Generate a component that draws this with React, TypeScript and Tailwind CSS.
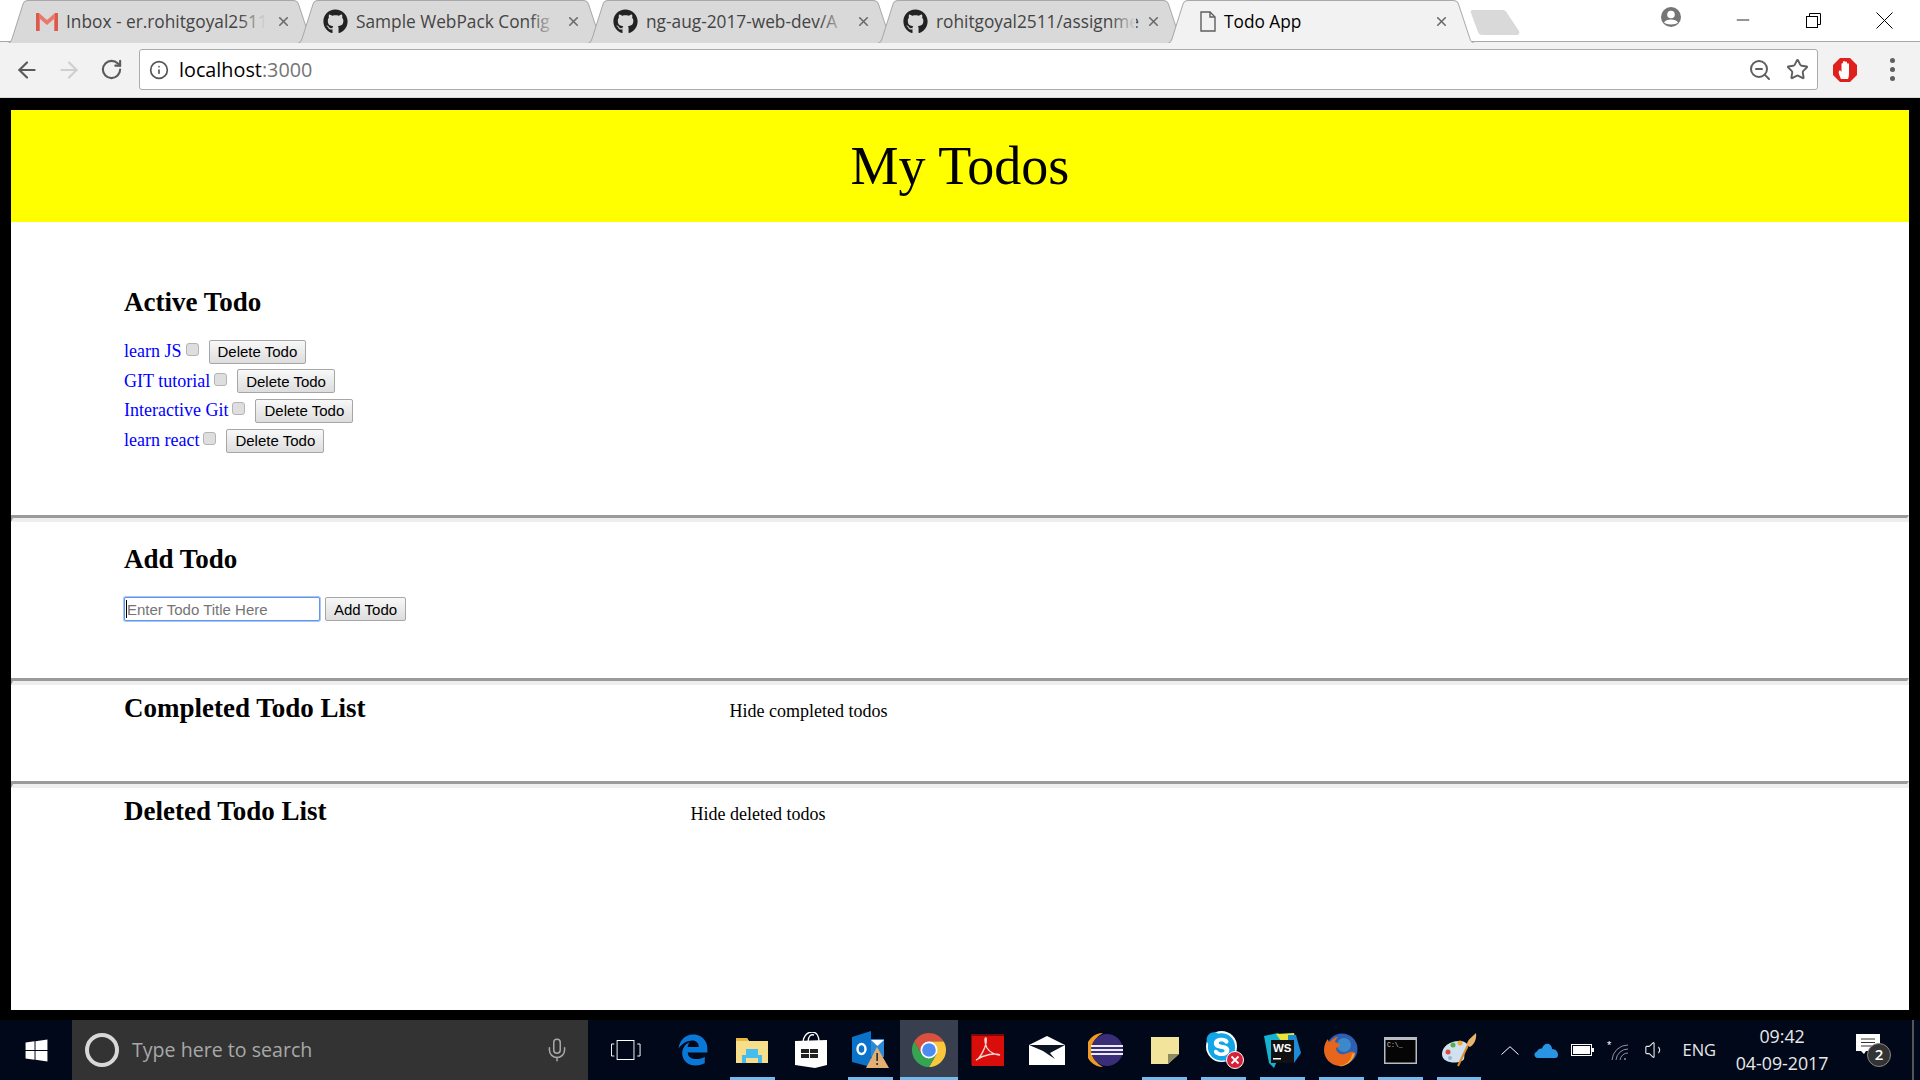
import { ArrowLeft, ArrowRight, Info, Mic, RotateCw, Star, Volume1, X, Minus, ZoomOut } from 'lucide-react';
import { FaEdgeLegacy, FaGithub, FaSkype, FaWindows } from 'react-icons/fa';

const uiFont = "font-['Open_Sans','Noto_Sans',sans-serif]";
const serif = "font-['Liberation_Serif','Times_New_Roman',serif]";
const arial = "font-['Liberation_Sans',Arial,sans-serif]";

function TabShape({ active }: { active?: boolean }) {
  return (
    <svg className="absolute inset-0 w-full h-full" viewBox="0 0 310 42" preserveAspectRatio="none">
      <path
        d="M0.5 42.5 C4 42.5 5 41 6 38 L17 4 C18 1.5 19.5 0.5 22 0.5 L287 0.5 C290 0.5 291.5 1.5 292.5 4 L304 38 C305 41 306 42.5 310 42.5"
        fill={active ? '#f2f2f2' : '#d9d9d9'}
        stroke="#a8a8a8"
      />
    </svg>
  );
}

function GmailIcon() {
  return (
    <svg width="22" height="18" viewBox="0 0 22 18">
      <path d="M0 0 H3 L11 7 L19 0 H22 V18 H18 V6 L11 12 L4 6 V18 H0 Z" fill="#e8786c" />
      <path d="M0 0 H3 V18 H0 Z M19 0 H22 V18 H19 Z" fill="#db5a4e" />
    </svg>
  );
}

function DocIcon() {
  return (
    <svg width="16" height="21" viewBox="0 0 16 21" fill="none" stroke="#5f5f5f" strokeWidth="1.4">
      <path d="M1 1 H10 L15 6 V20 H1 Z" />
      <path d="M10 1 V6 H15" />
    </svg>
  );
}

function Tab({ icon, title, active }: { icon: React.ReactNode; title: string; active?: boolean }) {
  return (
    <div className={`relative w-[310px] h-[43px] -mr-[20px] shrink-0 ${active ? 'z-10' : ''}`}>
      <TabShape active={active} />
      <div className="relative h-full flex items-center">
        <div className={`${active ? 'w-[58px]' : 'w-[60px]'} shrink-0 flex justify-end pr-[8px]`}>{icon}</div>
        <div className="relative w-[200px] whitespace-nowrap text-[17.3px] text-[#444]">
          <span className={active ? 'text-black' : ''}>{title}</span>
          {!active && <div className="absolute right-0 inset-y-0 w-[26px] bg-gradient-to-r from-transparent to-[#d9d9d9]" />}
        </div>
        <X size={15} strokeWidth={2.6} color="#6b6b6b" className="shrink-0 ml-[10px]" />
      </div>
    </div>
  );
}

function Opera() {
  return (
    <svg width="24" height="24" viewBox="0 0 24 24">
      <path d="M7 0 H17 L24 7 V17 L17 24 H7 L0 17 V7 Z" fill="#e0201c" />
      <path
        d="M8 21 C7 18 5 15 6 13 C7 12 8 13 8.500 14 V6 C8.500 4.500 10 4.500 10 6 V4 C10 2.500 12 2.500 12 4 V4.500 C12 3 14 3 14 4.500 V6 C14 5 16 5 16 6.500 V15 C16 18 15.500 20 15 21 Z"
        fill="#fff"
      />
    </svg>
  );
}

function ChromeIcon() {
  return (
    <svg width="34" height="34" viewBox="4 4 40 40">
      <path d="M6.68 14 A20 20 0 0 1 41.32 14 L24 14 L15.34 29 Z" fill="#d9503f" />
      <path d="M41.32 14 A20 20 0 0 1 24 44 L32.66 29 L24 14 Z" fill="#f8c73a" />
      <path d="M24 44 A20 20 0 0 1 6.68 14 L15.34 29 L32.66 29 Z" fill="#36a552" />
      <circle cx="24" cy="24" r="10" fill="#fff" />
      <circle cx="24" cy="24" r="8" fill="#4d8bf0" />
    </svg>
  );
}

function ExplorerIcon() {
  return (
    <svg width="32" height="27" viewBox="0 0 32 27">
      <path d="M0 1 H11 L13 4 H32 V26 H0 Z" fill="#f6de8b" />
      <path d="M0 1 H11 L13 4 H0 Z" fill="#e8b93d" />
      <path d="M10 12 H22 V18 H26 V26 H22 V21 H10 V26 H6 V18 H10 Z" fill="#45bdee" />
    </svg>
  );
}

function StoreIcon() {
  return (
    <svg width="32" height="36" viewBox="0 0 32 36">
      <path d="M0 9 L32 8 V33 L20 36 L0 33 Z" fill="#fff" />
      <path d="M8 12 C8 2 14 0 17 0 C22 0 24 5 24 10 M13 10 C13 4 16 2 19 3" fill="none" stroke="#fff" strokeWidth="1.4" />
      <path d="M6 17 H14 V21 H6 Z M15 17 H23 V21 H15 Z M6 22 H14 V26 H6 Z M15 22 H23 V26 H15 Z" fill="#222" />
    </svg>
  );
}

function OutlookIcon() {
  return (
    <svg width="37" height="38" viewBox="0 0 37 38">
      <path d="M0 6 L19 0 V36 L0 31 Z" fill="#0a72c8" />
      <rect x="19" y="8" width="13" height="18" fill="#2a8ad6" />
      <path d="M19 9 L32 9 L25.500 15 Z" fill="#fff" />
      <ellipse cx="9.500" cy="18" rx="4" ry="5" fill="none" stroke="#fff" strokeWidth="2.4" />
      <path d="M25 16 L37 37 H14 Z" fill="#e5ae73" />
      <path d="M24.300 22 H26 V30 H24.300 Z M24.300 32 H26 V34 H24.300 Z" fill="#333" />
    </svg>
  );
}

function AcrobatIcon() {
  return (
    <svg width="33" height="32" viewBox="0 0 33 32">
      <rect x="0" y="0" width="33" height="31" fill="#7a0808" />
      <rect x="1" y="2" width="32" height="30" fill="#d90e0a" />
      <path d="M5 26 C9 25 17 10 15 4 C14 3 13 8 16 14 C19 19 25 21 29 21 C24 19 14 20 5 26 Z" fill="none" stroke="#f2d5d5" strokeWidth="1.4" />
    </svg>
  );
}

function MailIcon() {
  return (
    <svg width="36" height="29" viewBox="0 0 36 29">
      <path d="M0 9 L18 0 L36 9 V29 H0 Z" fill="#fff" />
      <path d="M0 9 L36 9 L21 17 L26 23 L14 15 Z" fill="#0d1524" />
      <path d="M0 9.500 L14 15.500 L0 10.500 Z" fill="#fff" />
    </svg>
  );
}

function EclipseIcon() {
  return (
    <svg width="35" height="34" viewBox="0 0 35 34">
      <path d="M15 0 A17 17 0 0 0 15 34 A19 19 0 0 1 15 0 Z" fill="#f09a20" />
      <circle cx="19" cy="17" r="16" fill="#3a2d78" />
      <path d="M3 13 H35 M3 17 H35 M3 21 H35" stroke="#eceaf6" strokeWidth="2" />
    </svg>
  );
}

function StickyIcon() {
  return (
    <svg width="28" height="27" viewBox="0 0 28 27">
      <path d="M0 0 H28 V17 L17 27 H0 Z" fill="#f2e59b" />
      <path d="M28 17 L17 27 V17 Z" fill="#8d8b62" />
    </svg>
  );
}

function SkypeIcon() {
  return (
    <div className="relative w-[38px] h-[38px] ml-[3px]">
      <div className="absolute left-0 top-0 w-[31px] h-[31px] rounded-full bg-white flex items-center justify-center">
        <FaSkype size={34} color="#12a5e8" />
      </div>
      <svg className="absolute right-0 bottom-0" width="18" height="18" viewBox="0 0 18 18">
        <circle cx="9" cy="9" r="8.500" fill="#d81f38" stroke="#fff" strokeWidth="1" />
        <path d="M5.500 5.500 L12.500 12.500 M12.500 5.500 L5.500 12.500" stroke="#fff" strokeWidth="1.800" />
      </svg>
    </div>
  );
}

function WebStormIcon() {
  return (
    <svg width="37" height="35" viewBox="0 0 37 35">
      <path d="M0 3 L14 0 L22 8 L10 35 L5 30 Z" fill="#14b3cf" />
      <path d="M12 1 L30 0 L33 12 L20 12 Z" fill="#e8e43a" />
      <path d="M24 2 L32 2 L37 20 L30 30 L24 12 Z" fill="#1c8cd8" />
      <rect x="7" y="7" width="23" height="23" fill="#111" />
      <text x="9" y="19" fill="#fff" fontSize="11.500" fontWeight="700" fontFamily="'Liberation Sans',Arial,sans-serif">WS</text>
      <rect x="9" y="25" width="8" height="1.500" fill="#fff" />
    </svg>
  );
}

function FirefoxIcon() {
  return (
    <svg width="34" height="34" viewBox="0 0 34 34">
      <circle cx="18" cy="16" r="15.500" fill="#2f5fb3" />
      <circle cx="20" cy="12" r="7" fill="#3c89c9" />
      <path d="M31 20 C29 30 20 34 15 33 C6 32 0 25 0 17 C0 12 2 8 4 6 C4 8 5 9 6 9 C8 6 11 4 14 4 C12 6 11 8 11 9 C13 10 16 11 16 12 C16 14 13 14 12 15 C12 19 16 22 20 21 C24 20 28 17 31 20 Z" fill="#e8661c" />
      <path d="M31 20 C29 30 20 34 15 33 C22 32 27 28 28 21 Z" fill="#f4a52a" />
    </svg>
  );
}

function CmdIcon() {
  return (
    <svg width="33" height="27" viewBox="0 0 33 27">
      <rect x="0" y="0" width="33" height="27" fill="#b9bcc0" />
      <rect x="1.500" y="3" width="30" height="22.500" fill="#050505" />
      <text x="3" y="10" fill="#cfcfcf" fontSize="6.500" fontFamily="'Liberation Mono',monospace">C:\_</text>
    </svg>
  );
}

function PaintIcon() {
  return (
    <svg width="36" height="34" viewBox="0 0 36 34">
      <path d="M1 21 C1 13 10 7 20 8 C27 9 29 14 25 17 C22 19 24 22 23 26 C21 31 1 32 1 21 Z" fill="#cfe0ee" />
      <circle cx="7" cy="19" r="2.500" fill="#d94b3f" />
      <circle cx="12" cy="12" r="2.500" fill="#56b04a" />
      <circle cx="19" cy="10" r="2.500" fill="#f0a830" />
      <circle cx="9" cy="25" r="2" fill="#8fb8d8" />
      <path d="M17 33 L27 12" stroke="#e08a2a" strokeWidth="2" />
      <path d="M26 12 C26 7 30 5 35 0 C36 6 33 12 29 14 Z" fill="#e9b36a" />
    </svg>
  );
}

function OneDriveIcon() {
  return (
    <svg width="24" height="15" viewBox="0 0 24 15">
      <path d="M4 15 C0 15 -1 10 3 8.500 C4 6 6 5 8 5.500 C9 2 12 0 15 1 C17 2 18 4 18 6 C22 6 24 9 24 12 C24 14 23 15 21 15 Z" fill="#2a94e4" />
    </svg>
  );
}

function Battery() {
  return (
    <svg width="23" height="12" viewBox="0 0 23 12">
      <rect x="0.500" y="0.500" width="20" height="11" fill="none" stroke="#fff" />
      <rect x="2" y="2" width="17" height="8" fill="#fff" />
      <rect x="21" y="4" width="2" height="4" fill="#fff" />
    </svg>
  );
}

function Wifi() {
  return (
    <svg width="22" height="22" viewBox="0 0 22 22" fill="none" stroke="#8f949b" strokeWidth="1">
      <text x="0" y="10" fill="#fff" stroke="none" fontSize="11" fontFamily="'Liberation Sans',Arial,sans-serif">*</text>
      <path d="M5 21 A16 16 0 0 1 21 6 M9 21 A12 12 0 0 1 21 10 M13 21 A8 8 0 0 1 21 14" />
      <circle cx="18" cy="20" r="1" fill="#8f949b" stroke="none" />
    </svg>
  );
}

function Notification() {
  return (
    <div className="relative w-[35px] h-[33px]">
      <svg className="absolute left-0 top-0" width="24" height="24" viewBox="0 0 24 24">
        <path d="M0 0 H24 V17 H10 L8 20 L5 17 H0 Z" fill="#fff" />
        <path d="M5 5 H19 M5 8.500 H19 M5 12 H19" stroke="#333" strokeWidth="1" />
      </svg>
      <div className={`absolute right-0 bottom-0 w-[24px] h-[24px] rounded-full bg-[#333] border border-[#888] text-white text-[15px] font-semibold flex items-center justify-center ${uiFont}`}>2</div>
    </div>
  );
}

const taskApps = [
  { key: 'edge', icon: <FaEdgeLegacy size={32} color="#0a78d7" /> },
  { key: 'explorer', icon: <ExplorerIcon />, line: 'double' },
  { key: 'store', icon: <StoreIcon /> },
  { key: 'outlook', icon: <OutlookIcon />, line: 'single' },
  { key: 'chrome', icon: <ChromeIcon />, line: 'active' },
  { key: 'acrobat', icon: <AcrobatIcon /> },
  { key: 'mail', icon: <MailIcon /> },
  { key: 'eclipse', icon: <EclipseIcon /> },
  { key: 'sticky', icon: <StickyIcon />, line: 'single' },
  { key: 'skype', icon: <SkypeIcon />, line: 'single' },
  { key: 'webstorm', icon: <WebStormIcon />, line: 'single' },
  { key: 'firefox', icon: <FirefoxIcon />, line: 'single' },
  { key: 'cmd', icon: <CmdIcon />, line: 'double' },
  { key: 'paint', icon: <PaintIcon />, line: 'single' },
];

const todos = ['learn JS', 'GIT tutorial', 'Interactive Git', 'learn react'];

const buttonClass = `h-[24px] px-[8px] border border-[#a6a6a6] rounded-[2px] bg-gradient-to-b from-[#f8f8f8] to-[#dddddd] text-[15px] leading-none text-black ${arial}`;

function Rule() {
  return <div className="h-[7px] border-t-[3px] border-b-[4px] border-x-[2px] border-t-[#9a9a9a] border-b-[#eeeeee] border-l-[#9a9a9a] border-r-[#eeeeee]" />;
}

export default function App() {
  return (
    <div className={`w-[1920px] h-[1080px] overflow-hidden flex flex-col bg-black ${uiFont}`}>
      {/* tab strip */}
      <div className="relative h-[42px] shrink-0 bg-white flex items-start pl-[6px] border-b border-[#a8a8a8]">
        <Tab icon={<GmailIcon />} title="Inbox - er.rohitgoyal2511" />
        <Tab icon={<FaGithub size={25} color="#222" />} title="Sample WebPack Config" />
        <Tab icon={<FaGithub size={25} color="#222" />} title="ng-aug-2017-web-dev/A" />
        <Tab icon={<FaGithub size={25} color="#222" />} title="rohitgoyal2511/assignme" />
        <Tab active icon={<DocIcon />} title="Todo App" />
        <svg className="ml-[14px] mt-[10px] shrink-0" width="50" height="25" viewBox="0 0 50 25">
          <path d="M3 0 H33 C35 0 36 1 37 3 L49 21 C50 23 49 25 47 25 H12 C10 25 9 24 8 22 L1 3 C0 1 1 0 3 0 Z" fill="#d9d9d9" />
        </svg>
        <div className="ml-auto flex items-center h-[42px] -translate-y-[1px]">
          <svg className="mr-[27px] -mt-[6px]" width="20" height="20" viewBox="0 0 20 20">
            <circle cx="10" cy="10" r="10" fill="#757575" />
            <circle cx="10" cy="7.500" r="3.800" fill="#fff" />
            <path d="M3 15.500 C5 11.500 15 11.500 17 15.500 C15 18 5 18 3 15.500 Z" fill="#fff" />
          </svg>
          <div className="w-[70px] flex justify-center"><Minus size={20} strokeWidth={1} color="#000" /></div>
          <div className="w-[70px] flex justify-center">
            <svg width="15" height="15" viewBox="0 0 15 15" fill="none" stroke="#000">
              <rect x="0.500" y="3.500" width="11" height="11" />
              <path d="M3.500 3.500 V0.500 H14.500 V11.500 H11.500" />
            </svg>
          </div>
          <div className="w-[72px] flex justify-center">
            <svg width="17" height="17" viewBox="0 0 17 17" stroke="#000"><path d="M0.500 0.500 L16.500 16.500 M16.500 0.500 L0.500 16.500" /></svg>
          </div>
        </div>
      </div>

      {/* toolbar */}
      <div className="h-[56px] shrink-0 bg-[#f2f2f2] flex items-center border-b border-[#dadada]">
        <ArrowLeft size={26} strokeWidth={2} color="#5a5a5a" className="ml-[14px]" />
        <ArrowRight size={26} strokeWidth={2} color="#cfcfcf" className="ml-[16px]" />
        <RotateCw size={23} strokeWidth={2.2} color="#5a5a5a" className="ml-[18px]" />
        <div className="ml-[16px] w-[1679px] h-[41px] bg-white border border-[#ababab] rounded-[3px] flex items-center">
          <Info size={20} strokeWidth={2} color="#555" className="ml-[9px]" />
          <span className="ml-[10px] text-[19.8px] text-black">localhost<span className="text-[#757575]">:3000</span></span>
          <ZoomOut size={24} strokeWidth={2} color="#5f5f5f" className="ml-auto" />
          <Star size={23} strokeWidth={2} color="#5f5f5f" className="ml-[14px] mr-[8px]" />
        </div>
        <div className="ml-[15px]"><Opera /></div>
        <div className="ml-[33px] flex flex-col gap-[4px]">
          <div className="w-[5px] h-[5px] rounded-full bg-[#5f5f5f]" />
          <div className="w-[5px] h-[5px] rounded-full bg-[#5f5f5f]" />
          <div className="w-[5px] h-[5px] rounded-full bg-[#5f5f5f]" />
        </div>
      </div>

      {/* page */}
      <div className={`mt-[12px] mx-[11px] h-[900px] shrink-0 bg-white text-black ${serif}`}>
        <h1 className="h-[112px] bg-[#ffff00] flex items-center justify-center text-[54px] font-normal">My Todos</h1>

        <section className="h-[293px] pl-[113px] pt-[64px]">
          <h2 className="text-[27px] leading-[32px] font-bold">Active Todo</h2>
          <ul className="mt-[21.5px] flex flex-col gap-[5.7px]">
            {todos.map((todo) => (
              <li key={todo} className="flex items-center h-[24px] text-[18px] text-[#0000ff]">
                <span className="-translate-y-[0.5px]">{todo}</span>
                <input type="checkbox" className="appearance-none w-[13px] h-[13px] ml-[4px] mb-[4px] rounded-[3px] bg-[#dedede] border border-[#b4b4b4]" />
                <button className={`${buttonClass} ml-[10px]`}>Delete Todo</button>
              </li>
            ))}
          </ul>
        </section>
        <Rule />

        <section className="h-[156px] pl-[113px] pt-[21px]">
          <h2 className="text-[27px] leading-[32px] font-bold">Add Todo</h2>
          <div className="mt-[22px] flex items-center">
            <div className="relative">
              <input
                placeholder="Enter Todo Title Here"
                className={`block w-[196px] h-[24px] px-[2px] bg-white border border-[#5f96ee] ring-1 ring-[#a9c6f4] rounded-[2px] outline-none text-[15px] placeholder:text-[#757575] ${arial}`}
              />
              <div className="absolute left-[2px] top-[3px] w-[1px] h-[18px] bg-black" />
            </div>
            <button className={`${buttonClass} ml-[5px]`}>Add Todo</button>
          </div>
        </section>
        <Rule />

        <section className="h-[96px] pl-[113px] pt-[7px] flex items-baseline gap-[364px]">
          <h2 className="text-[27px] leading-[32px] font-bold">Completed Todo List</h2>
          <span className="text-[18px]">Hide completed todos</span>
        </section>
        <Rule />

        <section className="pl-[113px] pt-[7px] flex items-baseline gap-[364px]">
          <h2 className="text-[27px] leading-[32px] font-bold">Deleted Todo List</h2>
          <span className="text-[18px]">Hide deleted todos</span>
        </section>
      </div>

      {/* taskbar */}
      <div className="mt-[10px] h-[60px] shrink-0 bg-[#00081a] flex items-stretch text-white">
        <div className="w-[72px] flex items-center justify-center"><FaWindows size={25} color="#fff" /></div>
        <div className="w-[516px] bg-[#333333] flex items-center">
          <div className="ml-[13px] w-[34px] h-[34px] rounded-full border-[4px] border-[#d8d8d8] bg-transparent" />
          <span className="ml-[13px] text-[19.6px] text-[#a8a8a8]">Type here to search</span>
          <Mic size={26} strokeWidth={1.4} color="#a8a8a8" className="ml-auto mr-[18px]" />
        </div>
        <div className="w-[76px] flex items-center justify-center">
          <svg width="30" height="20" viewBox="0 0 32 20" preserveAspectRatio="none" fill="none" stroke="#fff">
            <rect x="6.500" y="0.500" width="18" height="19" />
            <path d="M3.500 4 H0.500 V16 H3.500 M28 4 H31 V16 H28" />
          </svg>
        </div>
        <div className="flex">
          {taskApps.map((app) => (
            <div key={app.key} className={`relative w-[58.9px] flex items-center justify-center ${app.line === 'active' ? 'bg-[#384050]' : ''}`}>
              {app.icon}
              {app.line && (
                <div className={`absolute bottom-0 h-[3px] bg-[#76b9ed] ${app.line === 'active' ? 'inset-x-0' : 'inset-x-[7px]'}`} />
              )}
            </div>
          ))}
        </div>
        <div className="flex-1 flex items-center relative">
          <svg className="ml-[13px]" width="18" height="9" viewBox="0 0 18 9" fill="none" stroke="#fff"><path d="M0.500 8.500 L9 0.700 L17.500 8.500" /></svg>
          <div className="ml-[15px]"><OneDriveIcon /></div>
          <div className="ml-[13px]"><Battery /></div>
          <div className="ml-[13px]"><Wifi /></div>
          <Volume1 size={22} strokeWidth={1.2} color="#e8e8e8" className="ml-[15px]" />
          <span className="ml-[16px] text-[16.5px] text-[#e8e8e8]">ENG</span>
          <div className="ml-[18px] w-[96px] flex flex-col items-center text-[17.8px] leading-[27px] text-[#e8e8e8]">
            <span>09:42</span>
            <span>04-09-2017</span>
          </div>
          <div className="ml-[26px]"><Notification /></div>
          <div className="absolute right-[6px] inset-y-0 w-[2px] bg-[#555]" />
        </div>
      </div>
    </div>
  );
}
